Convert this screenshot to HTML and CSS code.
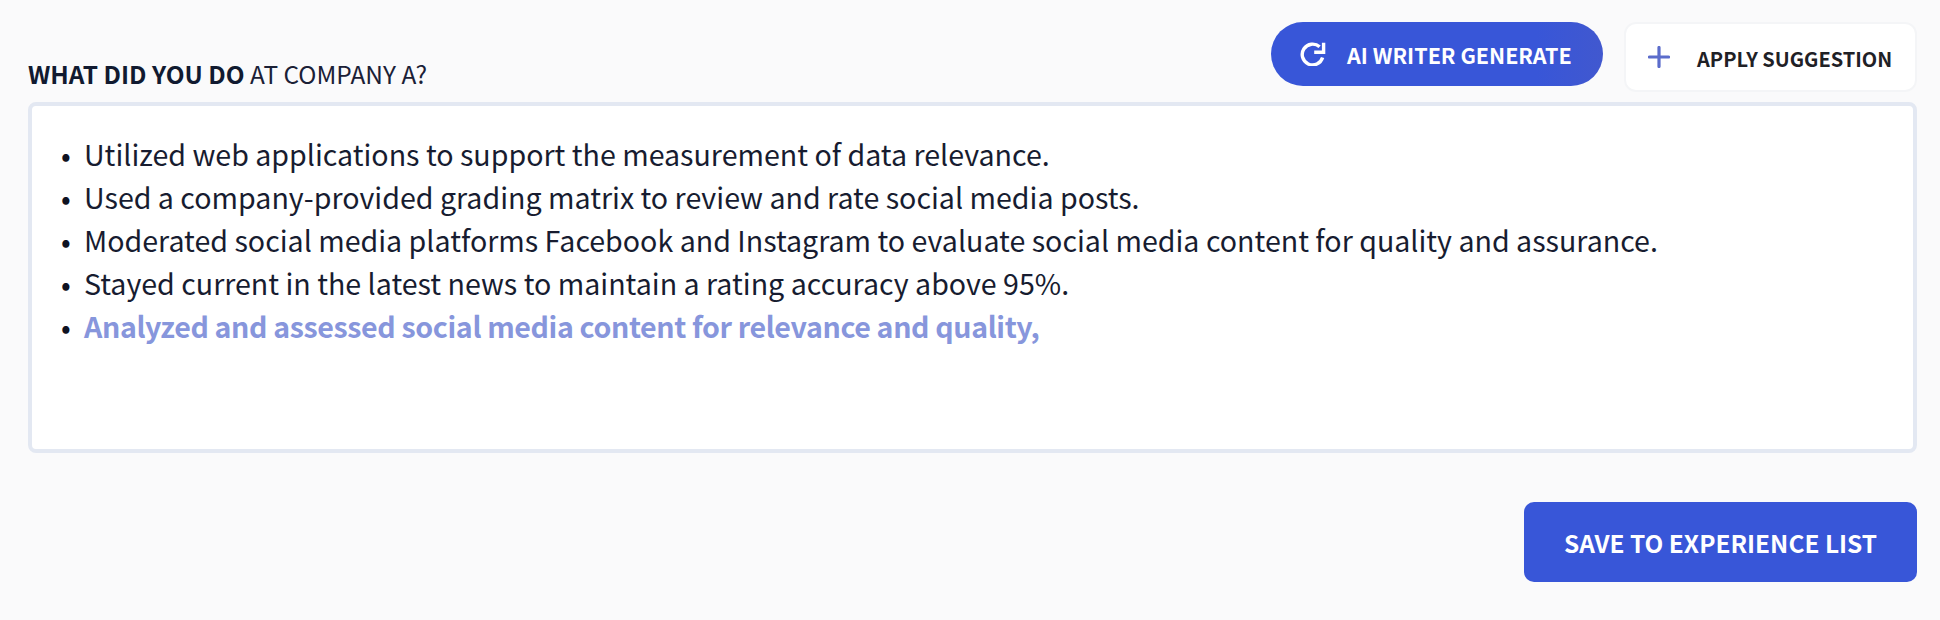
FILE: index.html
```html
<!DOCTYPE html>
<html lang="en">
<head>
<meta charset="utf-8">
<title>Experience</title>
<link rel="stylesheet" href="styles.css">
</head>
<body>
<main class="page">
  <header class="head">
    <h2 class="label"><strong>WHAT DID YOU DO</strong> AT COMPANY A?</h2>
    <div class="actions">
      <button class="btn-ai" type="button">
        <svg class="icon-refresh" viewBox="0 0 26 24" aria-hidden="true"><path d="M22.6 15.5A10.4 10.4 0 1 1 19.6 4.8" fill="none" stroke="#fff" stroke-width="3.4"/><path d="M23.6 0.8v9.4h-9.4" fill="none" stroke="#fff" stroke-width="3.4"/></svg>
        <span>AI WRITER GENERATE</span>
      </button>
      <button class="btn-apply" type="button">
        <svg class="icon-plus" viewBox="0 0 22 22" aria-hidden="true"><path d="M11 1.5v19M1.5 11h19" fill="none" stroke="#5b6ccb" stroke-width="3.2" stroke-linecap="round"/></svg>
        <span>APPLY SUGGESTION</span>
      </button>
    </div>
  </header>
  <div class="editor">
    <ul class="bullets">
      <li>Utilized web applications to support the measurement of data relevance.</li>
      <li>Used a company-provided grading matrix to review and rate social media posts.</li>
      <li>Moderated social media platforms Facebook and Instagram to evaluate social media content for quality and assurance.</li>
      <li>Stayed current in the latest news to maintain a rating accuracy above 95%.</li>
      <li><span class="suggested">Analyzed and assessed social media content for relevance and quality,</span></li>
    </ul>
  </div>
  <footer class="foot">
    <button class="btn-save" type="button">SAVE TO EXPERIENCE LIST</button>
  </footer>
</main>
</body>
</html>
```
FILE: styles.css
```css
* { box-sizing: border-box; }
html, body { margin: 0; height: 100%; }
body {
  background: #fafafb;
  font-family: "Noto Sans CJK JP", "Noto Sans", sans-serif;
  color: #1a2036;
}
.page { padding: 22px 23px 0 28px; }
.head {
  display: flex;
  justify-content: space-between;
  align-items: flex-start;
  height: 80px;
}
.label {
  margin: 36px 0 0;
  font-size: 24.45px;
  line-height: 32px;
  font-weight: 400;
  color: #1a2036;
}
.label strong { font-weight: 700; color: #111a30; }
.actions { display: flex; align-items: flex-start; gap: 21px; }
button { font-family: inherit; border: 0; cursor: pointer; padding: 0; }
.btn-ai {
  width: 332px;
  height: 64px;
  border-radius: 32px;
  background: linear-gradient(90deg, #3856d8 80%, #4158cf);
  color: #fff;
  font-size: 21.5px;
  font-weight: 700;
  display: flex;
  align-items: center;
  padding-left: 29px;
  gap: 21px;
}
.icon-refresh { width: 26px; height: 24px; }
.btn-apply {
  width: 293px;
  height: 70px;
  background: #fff;
  border: 2px solid #f4f5f7;
  border-radius: 12px;
  color: #1f2126;
  font-size: 20px;
  font-weight: 700;
  display: flex;
  align-items: center;
  padding-left: 22px;
  gap: 27px;
}
.icon-plus { width: 22px; height: 22px; }
.btn-apply span { padding-top: 2px; }
.editor {
  height: 351px;
  background: #fff;
  border: 4px solid #e3e8f2;
  border-radius: 8px;
  padding: 26px 0 0 29px;
}
.bullets { margin: 0; padding: 0; list-style: none; font-size: 28.6px; line-height: 43px; color: #171c30; }
.bullets li::before { content: "\2022"; display: inline-block; width: 23px; color: #0f1222; }
.suggested { color: #8796dc; font-weight: 700; letter-spacing: -0.37px; }
.foot { display: flex; justify-content: flex-end; padding-top: 49px; }
.btn-save {
  width: 393px;
  height: 80px;
  border-radius: 10px;
  background: #3856d8;
  color: #fff;
  font-size: 24.4px;
  font-weight: 700;
}
```
